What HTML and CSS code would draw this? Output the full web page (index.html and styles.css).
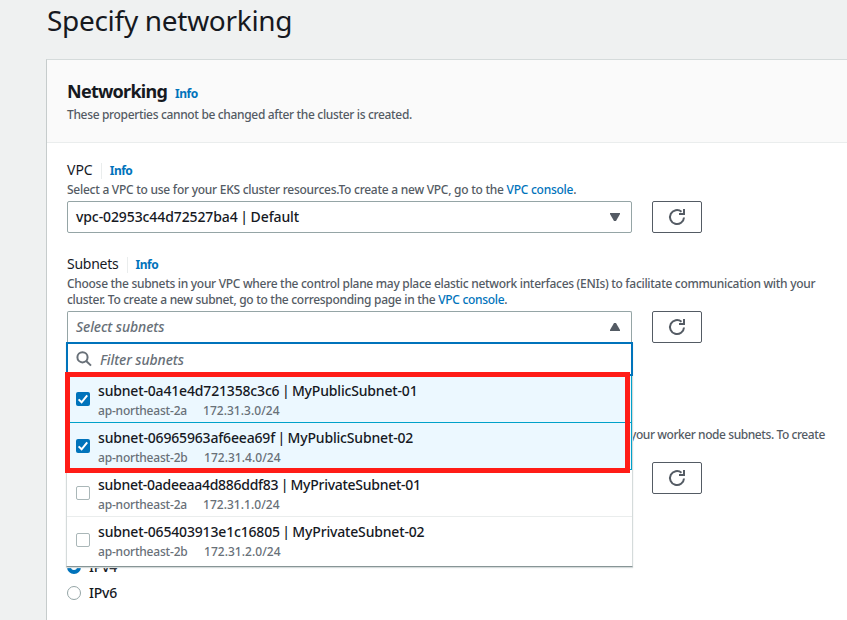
FILE: index.html
```html
<!DOCTYPE html>
<html lang="en">
<head>
<meta charset="utf-8">
<title>Specify networking</title>
<link rel="stylesheet" href="styles.css">
</head>
<body>
<svg class="defs" width="0" height="0">
  <symbol id="refresh" viewBox="0 0 18 18">
    <path d="M16 9.5A7 7 0 1 1 13.5 3.7" fill="none" stroke="currentColor" stroke-width="2"/>
    <path d="M15 1h2v6h-6V5h4z" fill="currentColor"/>
  </symbol>
  <symbol id="check" viewBox="0 0 14 14">
    <path d="M2.6 7.4l3 2.9 5.6-7" fill="none" stroke="#fff" stroke-width="2"/>
  </symbol>
</svg>
<h1 class="title">Specify networking</h1>
<main class="card">
  <header class="card-header">
    <div class="heading-row"><h2 class="heading">Networking</h2><a class="info">Info</a></div>
    <p class="desc header-desc">These properties cannot be changed after the cluster is created.</p>
  </header>
  <div class="content">
    <section class="field">
      <div class="label-row"><span class="label">VPC</span><span class="divided"><a class="info">Info</a></span></div>
      <p class="desc desc-vpc">Select a VPC to use for your EKS cluster resources.To create a new VPC, go to the <a class="link">VPC console</a>.</p>
      <div class="control-row">
        <div class="select"><span class="value">vpc-02953c44d72527ba4 | Default</span><svg class="caret" viewBox="0 0 10 8"><path d="M0 0h10v1L6 8H4L0 1z"/></svg></div>
        <button class="refresh"><svg><use href="#refresh"/></svg></button>
      </div>
    </section>
    <section class="field subnets">
      <div class="label-row"><span class="label label-subnets">Subnets</span><span class="divided"><a class="info">Info</a></span></div>
      <p class="desc"><span class="line-a">Choose the subnets in your VPC where the control plane may place elastic network interfaces (ENIs) to facilitate communication with your</span><br><span class="line-b">cluster. To create a new subnet, go to the corresponding page in the <a class="link">VPC console</a>.</span></p>
      <div class="control-row">
        <div class="select open"><span class="placeholder">Select subnets</span><svg class="caret" viewBox="0 0 10 8"><path d="M0 8h10V7L6 0H4L0 7z"/></svg>
          <div class="dropdown">
            <div class="filter"><svg class="search" viewBox="0 0 16 16"><circle cx="6.5" cy="6.3" r="5.1"/><path d="M10.2 10L15 14.6"/></svg><span class="placeholder filter-text">Filter subnets</span></div>
            <div class="option selected"><span class="checkbox checked"><svg><use href="#check"/></svg></span><div><div class="name">subnet-0a41e4d721358c3c6 | MyPublicSubnet-01</div><div class="tags"><span class="zone">ap-northeast-2a</span><span class="cidr">172.31.3.0/24</span></div></div></div>
            <div class="option selected"><span class="checkbox checked"><svg><use href="#check"/></svg></span><div><div class="name">subnet-06965963af6eea69f | MyPublicSubnet-02</div><div class="tags"><span class="zone zone-b">ap-northeast-2b</span><span class="cidr">172.31.4.0/24</span></div></div></div>
            <div class="option"><span class="checkbox"></span><div><div class="name name-tight">subnet-0adeeaa4d886ddf83 | MyPrivateSubnet-01</div><div class="tags"><span class="zone">ap-northeast-2a</span><span class="cidr">172.31.1.0/24</span></div></div></div>
            <div class="option last"><span class="checkbox"></span><div><div class="name">subnet-065403913e1c16805 | MyPrivateSubnet-02</div><div class="tags"><span class="zone zone-b">ap-northeast-2b</span><span class="cidr">172.31.2.0/24</span></div></div></div>
            <div class="highlight"></div>
          </div>
        </div>
        <button class="refresh"><svg><use href="#refresh"/></svg></button>
      </div>
    </section>
    <section class="field security">
      <p class="desc desc-security">your worker node subnets. To create</p>
      <div class="control-row">
        <div class="select"></div>
        <button class="refresh"><svg><use href="#refresh"/></svg></button>
      </div>
    </section>
    <section class="radios">
      <div class="radio-row"><span class="radio on"></span><span class="radio-label">IPv4</span></div>
      <div class="radio-row"><span class="radio"></span><span class="radio-label">IPv6</span></div>
    </section>
  </div>
</main>
</body>
</html>
```
FILE: styles.css
```css
* { box-sizing: border-box; }
body {
  margin: 0;
  height: 620px;
  overflow: hidden;
  background: #eff1f1;
  color: #16191f;
  font-family: "Noto Sans", "Open Sans", sans-serif;
  font-size: 14px;
  font-weight: 500;
  line-height: 22px;
  white-space: nowrap;
}
h1, h2, p { margin: 0; }
.defs { display: block; height: 0; }
.title { height: 60px; padding: 2px 0 0 47px; font-size: 28px; font-weight: 400; line-height: 36px; letter-spacing: -0.3px; }
.card { height: 580px; margin: -1px 0 0 46px; border: 1px solid #d5dbdb; border-right: 0; border-left-color: #c6cccc; background: #fff; }
.card-header { height: 83px; padding: 19px 20px 0; background: #fafafa; border-bottom: 1px solid #eaeded; }
.heading-row { display: flex; align-items: baseline; height: 24px; }
.heading { font-size: 18px; font-weight: 700; line-height: 24px; letter-spacing: -0.75px; }
.info { color: #0073bb; font-size: 12px; font-weight: 700; line-height: 16px; letter-spacing: -0.5px; }
.heading-row .info { margin-left: 8px; }
.desc { color: #545b64; font-size: 12px; font-weight: 500; line-height: 16px; letter-spacing: -0.3px; }
.header-desc { margin-top: 4px; letter-spacing: -0.34px; }
.desc-vpc { letter-spacing: -0.26px; }
.link { color: #0073bb; }
.content { padding: 16px 20px 0; }
.label-row { display: flex; align-items: center; height: 23px; }
.label { padding-bottom: 2px; font-weight: 400; }
.label-subnets { letter-spacing: -0.25px; }
.divided { display: flex; align-items: center; height: 16px; margin-left: 8px; padding: 1px 0 0 8px; border-left: 1px solid #eaeded; }
.control-row { display: flex; gap: 20px; margin-top: 3px; }
.select { position: relative; display: flex; align-items: center; justify-content: space-between; width: 565px; height: 32px; padding: 0 11px 0 8px; border: 1px solid #95a5a6; border-radius: 2px; background: #fff; }
.value { letter-spacing: -0.1px; word-spacing: -0.9px; }
.caret { width: 10px; height: 8px; fill: #545b64; }
.placeholder { color: #687078; font-style: italic; letter-spacing: -0.1px; }
.refresh { display: grid; place-items: center; width: 50px; height: 32px; padding: 0; border: 1px solid #545b64; border-radius: 2px; background: #fff; color: #545b64; }
.refresh svg { width: 18px; height: 18px; }
.subnets { margin-top: 20px; }
.open { padding-bottom: 1px; border-bottom: 0; border-radius: 2px 2px 0 0; }
.dropdown { position: absolute; z-index: 2; left: -2px; top: 30px; width: 567px; height: 225px; border: 1px solid #d5dbdb; border-top: 0; border-bottom-color: #879596; background: #fff; box-shadow: 0 1px 1px #d5dbdb; }
.filter { display: flex; align-items: center; height: 34px; margin: 0 -1px; padding: 1px 0 0 8px; border: 2px solid #0073bb; }
.search { width: 16px; height: 16px; margin-top: -1px; fill: none; stroke: #687078; stroke-width: 2; }
.filter-text { margin-left: 8px; }
.option { display: flex; align-items: center; height: 47px; padding-left: 9px; border-bottom: 1px solid #eaeded; }
.selected { background: #ecf8ff; border-right: 1px solid #00a1c9; border-bottom-color: #00a1c9; }
.last { height: 46px; border-bottom: 0; }
.checkbox { width: 14px; height: 14px; margin-right: 8px; border: 1px solid #aab7b8; border-radius: 2px; background: #fff; }
.checked { display: flex; border: 0; background: #0073bb; }
.checked svg { width: 14px; height: 14px; }
.name { height: 20px; line-height: 20px; letter-spacing: -0.17px; word-spacing: -1px; }
.name-tight { letter-spacing: -0.27px; }
.tags { display: flex; height: 17px; padding-top: 2px; color: #687078; font-size: 12px; font-weight: 500; line-height: 16px; letter-spacing: -0.2px; }
.zone { width: 105px; }
.zone-b { width: 106px; }
.cidr { letter-spacing: 0.03px; }
.highlight { position: absolute; left: -2px; top: 30px; width: 565px; height: 101px; border: 5px solid #ff1c17; }
.security { margin-top: 84px; }
.desc-security { height: 32px; padding-left: 563px; letter-spacing: -0.43px; }
.radios { margin-top: 62px; }
.radio-row { display: flex; align-items: center; height: 22px; margin-bottom: 4px; letter-spacing: -0.2px; }
.radio { width: 14px; height: 14px; margin-right: 8px; border: 1px solid #95a5a6; border-radius: 50%; background: #fff; }
.on { border: 4px solid #0073bb; }
```
